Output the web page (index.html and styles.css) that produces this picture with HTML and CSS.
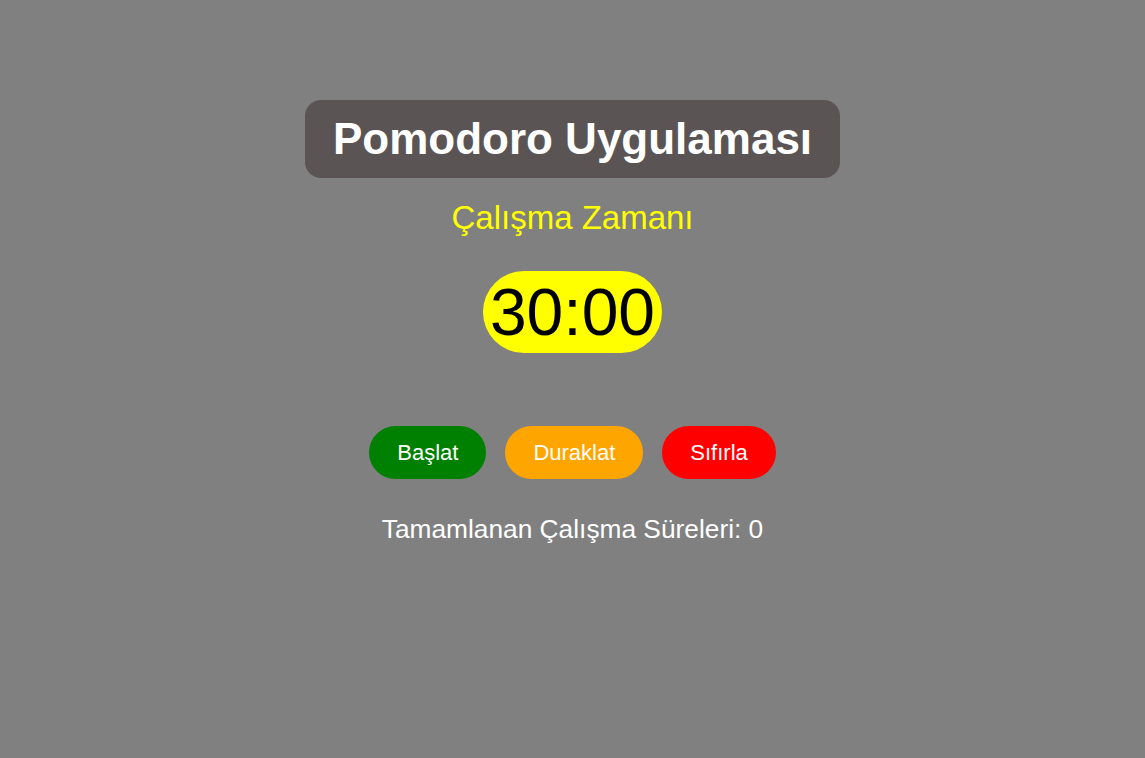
FILE: index.html
```html
<!DOCTYPE html>
<html lang="tr">
<head>
<meta charset="utf-8">
<title>Pomodoro Uygulaması</title>
<link rel="stylesheet" href="styles.css">
</head>
<body>
<main class="app">
  <h1 class="title">Pomodoro Uygulaması</h1>
  <h2 class="mode">Çalışma Zamanı</h2>
  <div class="timer">30:00</div>
  <div class="controls">
    <button class="btn btn-start">Başlat</button>
    <button class="btn btn-pause">Duraklat</button>
    <button class="btn btn-reset">Sıfırla</button>
  </div>
  <p class="count">Tamamlanan Çalışma Süreleri: 0</p>
</main>
</body>
</html>
```

FILE: styles.css
```css
html, body {
  margin: 0;
  padding: 0;
  height: 100%;
}
body {
  background: #808080;
  font-family: "Liberation Sans", Arial, sans-serif;
}
.app {
  display: flex;
  flex-direction: column;
  align-items: center;
  padding-top: 100px;
}
.title {
  margin: 0;
  background: #5a5454;
  color: #fff;
  font-size: 44px;
  font-weight: bold;
  line-height: 50px;
  padding: 14px 28px;
  border-radius: 16px;
}
.mode {
  margin: 21px 0 0;
  color: #ffff00;
  font-size: 33px;
  font-weight: normal;
  line-height: 38px;
}
.timer {
  margin-top: 34px;
  background: #ffff00;
  color: #000;
  font-size: 66px;
  line-height: 76px;
  padding: 3px 7px;
  border-radius: 42px;
}
.controls {
  display: flex;
  gap: 19px;
  margin-top: 73px;
}
.btn {
  border: none;
  color: #fff;
  font-family: "Liberation Sans", Arial, sans-serif;
  font-size: 22px;
  line-height: 25px;
  padding: 14px 28px;
  border-radius: 27px;
  cursor: pointer;
}
.btn-start { background: #008000; }
.btn-pause { background: #ffa500; }
.btn-reset { background: #ff0000; }
.count {
  margin: 35px 0 0;
  color: #fff;
  font-size: 26.3px;
  line-height: 30px;
}
```
